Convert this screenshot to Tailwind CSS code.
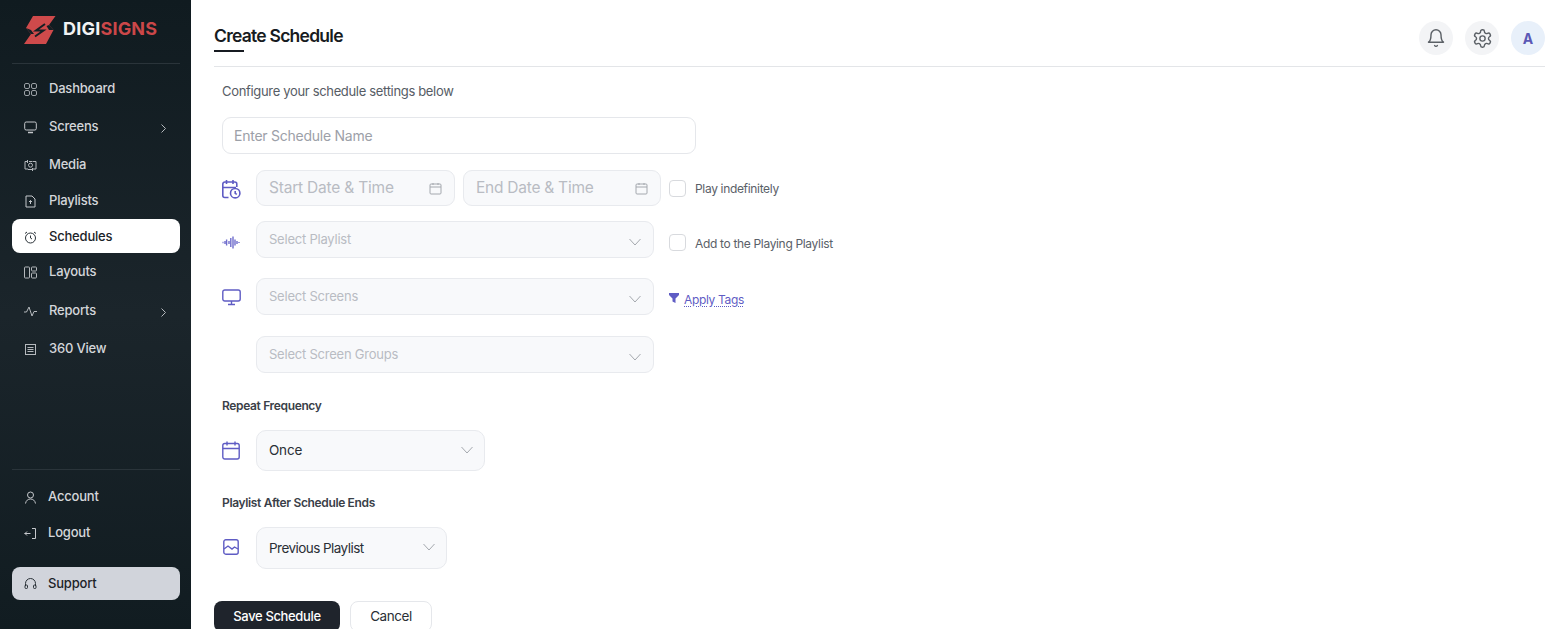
<!DOCTYPE html>
<html lang="en">
<head>
  <meta charset="UTF-8" />
  <title>Create Schedule</title>
  <script src="https://cdn.jsdelivr.net/npm/@tailwindcss/browser@4"></script>
</head>
<body class="bg-white font-['Inter',sans-serif] text-gray-800 overflow-hidden">
  <div class="flex h-[629px] w-[1568px] overflow-hidden">
    <!-- sidebar -->
    <aside class="w-[191px] shrink-0 h-full bg-gradient-to-b from-[#101b20] via-[#1b252b] to-[#111c21] pl-3 pr-[11px] text-[13px] tracking-[-0.2px] font-medium text-[#d4d6da]">
      <div class="h-[64px] border-b border-[#2a343a] flex items-start pt-[16px] pl-3 gap-[7px]">
        <svg class="w-[32px] h-[28px] shrink-0" viewBox="0 0 32 28"><path fill="#cf4a4b" d="M9 0H31.500L25 9L29.500 14L22 28H0L7 18L2 12z"/><path fill="none" stroke="#141f24" stroke-width="2" d="M21 8L12 14.500H19.500L11 20.500"/><path fill="#141f24" d="M2 12L7 18H10L7 14zM25 9L29.500 14H25L22.500 10z"/></svg>
        <div class="text-[18px] leading-[26px] font-bold tracking-[0.2px] text-[#f1f2f3]">DIGI<span class="text-[#cb4749]">SIGNS</span></div>
      </div>
      <nav>
        <a class="mt-[7px] h-[34px] flex items-center pl-3 pt-[2px] gap-[12px]">
          <svg class="w-[13px] h-[13px]" viewBox="0 0 13 13" fill="none" stroke="#9aa0a5"><rect x=".5" y=".5" width="5" height="5" rx="1.500"/><rect x="7.500" y=".5" width="5" height="5" rx="1.500"/><rect x=".5" y="7.500" width="5" height="5" rx="1.500"/><rect x="7.500" y="7.500" width="5" height="5" rx="1.500"/></svg>
          Dashboard</a>
        <a class="mt-[4px] h-[34px] flex items-center pl-3 pt-[2px] gap-[12px]">
          <svg class="w-[13px] h-[13px]" viewBox="0 0 13 13" fill="none" stroke="#c5c8cc"><rect x=".7" y="1" width="11.600" height="8" rx="1.500"/><path d="M4 11.500h5" stroke-width="1.500"/></svg>
          <span class="flex-1">Screens</span>
          <svg class="w-[7px] h-[9px] mr-[13px] mt-[2px]" viewBox="0 0 7 9" fill="none" stroke="#b5b9bd"><path d="M1.500.5l4 4-4 4"/></svg></a>
        <a class="mt-[4px] h-[34px] flex items-center pl-3 pt-[2px] gap-[12px]">
          <svg class="w-[13px] h-[13px]" viewBox="0 0 13 13" fill="none" stroke="#b5b9bd"><path d="M3 2.500H1v7.500h3M9 2.500h3v7.500H9"/><path d="M3.500 1v3M5 2.500h3.500M8.500 12v-3M4 10.500h4"/><circle cx="6.500" cy="6.200" r="2"/></svg>
          Media</a>
        <a class="mt-[2px] h-[34px] flex items-center pl-3 pt-[2px] gap-[12px]">
          <svg class="w-[13px] h-[13px]" viewBox="0 0 13 13" fill="none" stroke="#c5c8cc"><path d="M2 1h6l3 3v8H2z"/><path d="M6.500 9V5.500M5 7l1.500-1.500L8 7"/></svg>
          Playlists</a>
        <a class="mt-[2px] h-[34px] flex items-center pl-3 pt-[2px] gap-[12px] bg-white rounded-[8px] text-[#1c2328]">
          <svg class="w-[13px] h-[13px]" viewBox="0 0 13 13" fill="none" stroke="#2a3238"><circle cx="6.500" cy="7" r="5"/><path d="M6.500 4.500V7l1.500 1M1 2.500L3 1M12 2.500L10 1"/></svg>
          Schedules</a>
        <a class="mt-[1px] h-[34px] flex items-center pl-3 pt-[2px] gap-[12px]">
          <svg class="w-[13px] h-[13px]" viewBox="0 0 13 13" fill="none" stroke="#b5b9bd"><rect x=".5" y="1" width="5" height="11" rx=".8"/><rect x="7.500" y="1" width="5" height="4" rx=".8"/><rect x="7.500" y="7" width="5" height="5" rx=".8"/></svg>
          Layouts</a>
        <a class="mt-[5px] h-[34px] flex items-center pl-3 pt-[2px] gap-[12px]">
          <svg class="w-[13px] h-[13px]" viewBox="0 0 13 13" fill="none" stroke="#b5b9bd"><path d="M0 7h2.500L5 2l3 9 2-4.500h3"/></svg>
          <span class="flex-1">Reports</span>
          <svg class="w-[7px] h-[9px] mr-[13px] mt-[2px]" viewBox="0 0 7 9" fill="none" stroke="#b5b9bd"><path d="M1.500.5l4 4-4 4"/></svg></a>
        <a class="mt-[4px] h-[34px] flex items-center pl-3 pt-[2px] gap-[12px]">
          <svg class="w-[13px] h-[13px]" viewBox="0 0 13 13" fill="none" stroke="#b5b9bd"><rect x="1.500" y="1.500" width="10" height="10"/><path d="M3.500 4.500h6M3.500 6.500h6M3.500 8.500h6"/></svg>
          360 View</a>
      </nav>
      <div class="mt-[104px] border-t border-[#2a343a]">
        <a class="mt-[9px] h-[34px] flex items-center pl-3 pt-[2px] gap-[11px]">
          <svg class="w-[13px] h-[13px]" viewBox="0 0 13 13" fill="none" stroke="#c5c8cc"><circle cx="6.500" cy="4" r="3"/><path d="M1.500 12.500c.5-3 2.500-4.500 5-4.500s4.500 1.500 5 4.500"/></svg>
          Account</a>
        <a class="mt-[2px] h-[34px] flex items-center pl-3 pt-[2px] gap-[11px]">
          <svg class="w-[13px] h-[13px]" viewBox="0 0 13 13" fill="none" stroke="#c5c8cc"><path d="M8 1.500h3.500v10H8M.5 6.500h6M3 4.500l-2 2 2 2"/></svg>
          Logout</a>
        <a class="mt-[18px] h-[33px] flex items-center pl-3 gap-[11px] bg-[#d1d4db] rounded-[8px] text-[#1c2328]">
          <svg class="w-[13px] h-[13px]" viewBox="0 0 13 13" fill="none" stroke="#2a3238"><path d="M1.500 9V6.500a5 5 0 0 1 10 0V9"/><rect x="1" y="8" width="2.500" height="3.500" rx="1"/><rect x="9.500" y="8" width="2.500" height="3.500" rx="1"/></svg>
          Support</a>
      </div>
    </aside>

    <!-- main -->
    <main class="flex-1 pl-[23px] pr-[23px]">
      <header class="h-[67px] border-b border-[#e3e5e8] flex justify-between">
        <div class="pt-[24px]">
          <h1 class="text-[17.500px] leading-[24px] font-semibold tracking-[-0.75px] text-[#171b21]">Create Schedule</h1>
          <div class="w-[30px] h-[2px] mt-[2px] bg-[#171b21]"></div>
        </div>
        <div class="flex gap-[12px] pt-[21px]">
          <div class="w-[34px] h-[34px] rounded-full bg-[#f3f4f6] flex items-center justify-center">
            <svg class="w-[20px] h-[20px]" viewBox="0 0 24 24" fill="none" stroke="#5b6066" stroke-width="1.700" stroke-linecap="round" stroke-linejoin="round"><path d="M6 8a6 6 0 0 1 12 0c0 7 3 9 3 9H3s3-2 3-9"/><path d="M10.300 21a1.940 1.940 0 0 0 3.400 0"/></svg>
          </div>
          <div class="w-[34px] h-[34px] rounded-full bg-[#f3f4f6] flex items-center justify-center">
            <svg class="w-[21px] h-[21px]" viewBox="0 0 24 24" fill="none" stroke="#5b6066" stroke-width="1.600" stroke-linecap="round" stroke-linejoin="round"><path d="M12.220 2h-.44a2 2 0 0 0-2 2v.18a2 2 0 0 1-1 1.730l-.43.250a2 2 0 0 1-2 0l-.15-.08a2 2 0 0 0-2.730.730l-.22.380a2 2 0 0 0 .730 2.730l.15.100a2 2 0 0 1 1 1.720v.510a2 2 0 0 1-1 1.740l-.15.090a2 2 0 0 0-.730 2.730l.22.380a2 2 0 0 0 2.730.730l.15-.08a2 2 0 0 1 2 0l.43.250a2 2 0 0 1 1 1.730V20a2 2 0 0 0 2 2h.44a2 2 0 0 0 2-2v-.18a2 2 0 0 1 1-1.730l.43-.250a2 2 0 0 1 2 0l.15.080a2 2 0 0 0 2.730-.730l.22-.390a2 2 0 0 0-.730-2.730l-.15-.080a2 2 0 0 1-1-1.740v-.500a2 2 0 0 1 1-1.740l.15-.090a2 2 0 0 0 .730-2.730l-.22-.380a2 2 0 0 0-2.730-.730l-.15.080a2 2 0 0 1-2 0l-.43-.250a2 2 0 0 1-1-1.730V4a2 2 0 0 0-2-2z"/><circle cx="12" cy="12" r="3"/></svg>
          </div>
          <div class="w-[34px] h-[34px] rounded-full bg-[#e8f0fa] flex items-center justify-center text-[14px] font-bold text-[#5b58b5]">A</div>
        </div>
      </header>

      <div class="pl-2">
        <p class="mt-[15px] text-[13px] leading-[18px] tracking-[-0.33px] text-[#565c65]">Configure your schedule settings below</p>
        <div class="mt-[17px] w-[474px] h-[37px] rounded-[9px] border border-[#e5e7eb] flex items-center pl-[11px] text-[14px] tracking-[-0.25px] text-[#9ca0a8]">Enter Schedule Name</div>

        <div class="mt-[16px] flex items-center h-[36px]">
          <svg class="w-[19px] h-[20px] mr-[15px] shrink-0 mt-[1px]" viewBox="0 0 19 20" fill="none" stroke="#5f5cc4" stroke-width="1.600"><path d="M6.500 18.500H2.800a2 2 0 0 1-2-2V5a2 2 0 0 1 2-2h10a2 2 0 0 1 2 2v3M4.500 1v4M11 1v4M1 8.500h13"/><circle cx="13.200" cy="14.200" r="4.700"/><path d="M13.200 12v2.400l1.600 1"/></svg>
          <div class="w-[199px] h-full rounded-[9px] border border-[#e8eaee] bg-[#f8f9fb] flex items-center justify-between pl-[12px] pr-[12px] text-[15.500px] tracking-[-0.2px] text-[#b9bcc3]">Start Date &amp; Time
            <svg class="w-[13px] h-[13px]" viewBox="0 0 13 13" fill="none" stroke="#a4a8ae"><rect x="1" y="2" width="11" height="10" rx="1"/><path d="M1 5h11M4 1v2M9 1v2"/></svg></div>
          <div class="ml-2 w-[198px] h-full rounded-[9px] border border-[#e8eaee] bg-[#f8f9fb] flex items-center justify-between pl-[12px] pr-[12px] text-[15.500px] tracking-[-0.25px] text-[#b9bcc3]">End Date &amp; Time
            <svg class="w-[13px] h-[13px]" viewBox="0 0 13 13" fill="none" stroke="#a4a8ae"><rect x="1" y="2" width="11" height="10" rx="1"/><path d="M1 5h11M4 1v2M9 1v2"/></svg></div>
          <div class="ml-2 w-[17px] h-[17px] rounded-[4px] border border-[#d8dade] bg-white"></div>
          <span class="ml-[9px] text-[12px] tracking-[-0.33px] text-[#5a6068] mt-[2px]">Play indefinitely</span>
        </div>

        <div class="mt-[15px] flex items-center h-[37px]">
          <svg class="w-[18px] h-[13px] mr-[16px] shrink-0 mt-[5px]" viewBox="0 0 18 13" fill="none" stroke="#6f6dcc" stroke-width="1.400"><path d="M.5 6.500h1M3 5v3M4.600 3.500v6M7 5v3M8.800 2v9M11 .5v12M13 3.500v6M15 5v3M17 6v1"/></svg>
          <div class="w-[398px] h-full rounded-[9px] border border-[#e8eaee] bg-[#f8f9fb] flex items-center justify-between pl-[12px] pr-[12px] text-[13px] tracking-[-0.22px] text-[#b9bcc3]">Select Playlist
            <svg class="w-[12px] h-[8px] mt-1" viewBox="0 0 12 8" fill="none" stroke="#a4a8ae"><path d="M.5 1L6 7l5.500-6"/></svg></div>
          <div class="ml-[15px] w-[17px] h-[17px] rounded-[4px] border border-[#d8dade] bg-white mt-[5px]"></div>
          <span class="ml-[9px] text-[12px] tracking-[-0.33px] text-[#5a6068] mt-[8px]">Add to the Playing Playlist</span>
        </div>

        <div class="mt-[20px] flex items-center h-[37px]">
          <svg class="w-[19px] h-[17px] mr-[15px] shrink-0 mt-[2px]" viewBox="0 0 19 17" fill="none" stroke="#5f5cc4" stroke-width="1.400"><rect x=".8" y="1" width="17.400" height="11" rx="2"/><path d="M9.500 12v3.500M6 15.500h7"/></svg>
          <div class="w-[398px] h-full rounded-[9px] border border-[#e8eaee] bg-[#f8f9fb] flex items-center justify-between pl-[12px] pr-[12px] text-[13px] tracking-[-0.22px] text-[#b9bcc3]">Select Screens
            <svg class="w-[12px] h-[8px] mt-1" viewBox="0 0 12 8" fill="none" stroke="#a4a8ae"><path d="M.5 1L6 7l5.500-6"/></svg></div>
          <svg class="ml-[15px] w-[10px] h-[10px] mt-[2px] shrink-0" viewBox="0 0 10 10" fill="#5f5cc4"><path d="M0 0h10v2L6.500 5.500V10L3.500 8.500v-3L0 2z"/></svg>
          <span class="ml-[5px] text-[12px] tracking-[-0.33px] text-[#5f5cc4] underline decoration-dotted underline-offset-2 mt-[6px]">Apply Tags</span>
        </div>

        <div class="mt-[21px] ml-[34px] w-[398px] h-[37px] rounded-[9px] border border-[#e8eaee] bg-[#f8f9fb] flex items-center justify-between pl-[12px] pr-[12px] text-[13px] tracking-[-0.22px] text-[#b9bcc3]">Select Screen Groups
          <svg class="w-[12px] h-[8px] mt-1" viewBox="0 0 12 8" fill="none" stroke="#a4a8ae"><path d="M.5 1L6 7l5.500-6"/></svg></div>

        <div class="mt-[25px] text-[12px] leading-[16px] font-semibold tracking-[-0.35px] text-[#3a4048]">Repeat Frequency</div>
        <div class="mt-[16px] flex items-center h-[41px]">
          <svg class="w-[18px] h-[19px] mr-[16px] shrink-0" viewBox="0 0 18 19" fill="none" stroke="#5f5cc4" stroke-width="1.400"><rect x=".8" y="2.500" width="16.400" height="15.500" rx="2"/><path d="M.8 7.500h16.400M5 .5v4M13 .5v4"/></svg>
          <div class="w-[229px] h-full rounded-[10px] border border-[#e8eaee] bg-[#f8f9fb] flex items-center justify-between pl-[12px] pr-[11px] text-[13.500px] tracking-[-0.2px] text-[#2a2f36]">Once
            <svg class="w-[12px] h-[8px] -mt-[2px]" viewBox="0 0 12 8" fill="none" stroke="#a4a8ae"><path d="M.5 1L6 7l5.500-6"/></svg></div>
        </div>

        <div class="mt-[24px] text-[12px] leading-[16px] font-semibold tracking-[-0.35px] text-[#3a4048]">Playlist After Schedule Ends</div>
        <div class="mt-[16px] flex items-center h-[42px]">
          <svg class="w-[16px] h-[16px] mr-[17px] ml-[1px] shrink-0 -mt-[2px]" viewBox="0 0 16 16" fill="none" stroke="#5f5cc4" stroke-width="1.400"><rect x=".8" y=".8" width="14.400" height="14.400" rx="2"/><path d="M1 10l4-3 4 3 2.500-2 3.500 2"/></svg>
          <div class="w-[191px] h-full rounded-[10px] border border-[#e8eaee] bg-[#f8f9fb] flex items-center justify-between pl-[12px] pr-[11px] text-[13.500px] tracking-[-0.55px] text-[#2a2f36]">Previous Playlist
            <svg class="w-[12px] h-[8px] -mt-[2px]" viewBox="0 0 12 8" fill="none" stroke="#a4a8ae"><path d="M.5 1L6 7l5.500-6"/></svg></div>
        </div>
      </div>

      <div class="mt-[32px] flex gap-[10px]">
        <button class="w-[126px] h-[31px] rounded-[8px] bg-[#1f242c] text-white text-[13px] font-medium tracking-[-0.35px]">Save Schedule</button>
        <button class="w-[82px] h-[31px] rounded-[8px] border border-[#e5e7eb] bg-white text-[#2a2f36] text-[13.500px] tracking-[-0.45px]">Cancel</button>
      </div>
    </main>
  </div>
</body>
</html>
